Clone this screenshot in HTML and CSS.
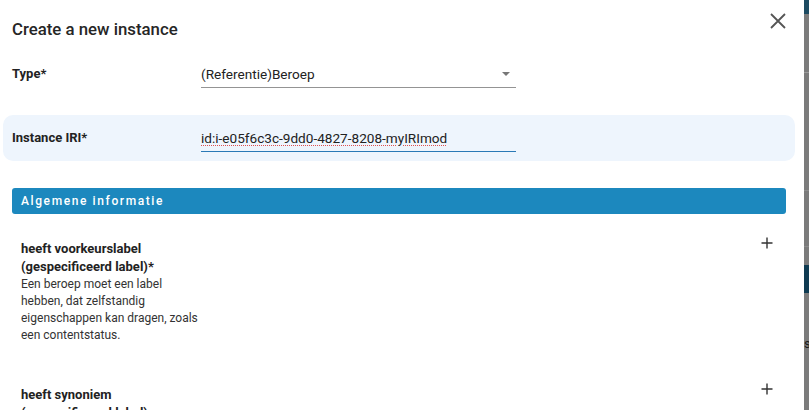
FILE: index.html
```html
<!DOCTYPE html>
<html lang="nl">
<head>
<meta charset="utf-8">
<title>Create a new instance</title>
<link rel="stylesheet" href="styles.css">
</head>
<body>
<div class="screen">
  <div class="dialog">
    <div class="dialog-header">
      <h1 class="dialog-title">Create a new instance</h1>
      <button class="close-btn" aria-label="Close">
        <svg width="16" height="16" viewBox="0 0 16 16"><path d="M1 1 L15 15 M15 1 L1 15" stroke="#555" stroke-width="1.8" fill="none"/></svg>
      </button>
    </div>

    <div class="field field-type">
      <div class="field-label">Type*</div>
      <div class="field-control select">
        <span class="value">(Referentie)Beroep</span>
        <span class="caret"></span>
      </div>
    </div>

    <div class="field field-iri">
      <div class="field-label">Instance IRI*</div>
      <div class="field-control input-active">
        <span class="value spell">id:i-e05f6c3c-9dd0-4827-8208-myIRImod</span>
      </div>
    </div>

    <div class="section">
      <div class="section-bar">Algemene informatie</div>

      <div class="prop">
        <div class="prop-info">
          <div class="prop-name">heeft voorkeurslabel (gespecificeerd label)*</div>
          <div class="prop-desc">Een beroep moet een label hebben, dat zelfstandig eigenschappen kan dragen, zoals een contentstatus.</div>
        </div>
        <svg class="plus" width="12" height="12" viewBox="0 0 12 12"><path d="M6 0.5 V11.5 M0.5 6 H11.5" stroke="#333" stroke-width="1.4" fill="none"/></svg>
      </div>

      <div class="prop">
        <div class="prop-info">
          <div class="prop-name">heeft synoniem (gespecificeerd label)</div>
        </div>
        <svg class="plus" width="12" height="12" viewBox="0 0 12 12"><path d="M6 0.5 V11.5 M0.5 6 H11.5" stroke="#333" stroke-width="1.4" fill="none"/></svg>
      </div>
    </div>
  </div>

  <div class="backdrop">
    <div class="bd-top"></div>
    <div class="bd-gray bd-a"></div>
    <div class="bd-line-light"></div>
    <div class="bd-gray bd-b"></div>
    <div class="bd-line"></div>
    <div class="bd-gray bd-c"></div>
    <div class="bd-line"></div>
    <div class="bd-gray bd-d"></div>
    <div class="bd-block"></div>
    <div class="bd-gray bd-e"><span class="bd-s">s</span></div>
  </div>
</div>
</body>
</html>
```

FILE: styles.css
```css
* { box-sizing: border-box; }
html, body { margin: 0; padding: 0; }
body {
  width: 809px;
  height: 410px;
  overflow: hidden;
  font-family: Roboto, "Liberation Sans", Arial, sans-serif;
  color: #222;
  background: #7a7a7a;
}
.screen {
  display: flex;
  width: 809px;
  height: 410px;
}
.dialog {
  width: 804px;
  height: 410px;
  background: #fff;
  overflow: hidden;
  flex: none;
}
.dialog-header {
  height: 46px;
  display: flex;
  justify-content: space-between;
  align-items: flex-start;
  padding: 0 18px 0 12px;
}
.dialog-title {
  margin: 0;
  padding-top: 19px;
  font-size: 16.8px;
  line-height: 20px;
  font-weight: 500;
  color: #262626;
}
.close-btn {
  margin-top: 13px;
  width: 16px;
  height: 16px;
  padding: 0;
  border: 0;
  background: none;
  display: block;
}
.close-btn svg { display: block; }

.field {
  display: flex;
  align-items: flex-end;
  padding-left: 12px;
}
.field-type { padding-top: 18px; }
.field-label {
  width: 189px;
  font-size: 13px;
  font-weight: 700;
  line-height: 20px;
  padding-bottom: 4px;
  color: #222;
}
.field-control {
  width: 315px;
  display: flex;
  align-items: center;
  justify-content: space-between;
  font-size: 13.6px;
  line-height: 20px;
  padding-bottom: 3px;
  border-bottom: 1px solid #949494;
  color: #222;
}
.caret {
  width: 0;
  height: 0;
  margin-right: 6px;
  border-left: 4.5px solid transparent;
  border-right: 4.5px solid transparent;
  border-top: 4.5px solid #777;
}
.field-iri {
  margin: 27px 0 0 3px;
  width: 792px;
  padding: 13px 0 9px 9px;
  background: #eef5fd;
  border-radius: 10px;
}
.input-active { border-bottom-color: #2a79b6; }
.spell {
  text-decoration: underline dotted #e0504f;
  text-decoration-thickness: 1.2px;
  text-underline-offset: 2px;
}

.section {
  margin: 27px 0 0 12px;
  width: 774px;
}
.section-bar {
  height: 26px;
  line-height: 26px;
  padding-left: 9px;
  background: #1c88be;
  color: #fff;
  border-radius: 3px;
  font-size: 12px;
  font-weight: 500;
  letter-spacing: 1.6px;
}
.prop {
  display: flex;
  justify-content: space-between;
  align-items: flex-start;
  padding: 0 13px 0 9px;
  margin-top: 26px;
}
.prop + .prop { margin-top: 42px; }
.prop-info { width: 181px; }
.prop-name {
  font-size: 13px;
  font-weight: 700;
  line-height: 18px;
  color: #222;
}
.prop-desc {
  font-size: 12px;
  line-height: 17px;
  color: #333;
}
.plus { display: block; margin-top: -3px; }

.backdrop {
  width: 5px;
  height: 410px;
  flex: none;
  display: flex;
  flex-direction: column;
}
.bd-top { height: 14px; background: #1d4b62; }
.bd-gray { background: #7b7b7b; }
.bd-a { height: 58px; }
.bd-line-light { height: 1px; background: #9a9a9a; }
.bd-b { height: 117px; }
.bd-line { height: 1px; background: #8c8c8c; }
.bd-c { height: 55px; }
.bd-d { height: 18px; }
.bd-block { height: 28px; background: #0f3b52; }
.bd-e { flex: 1; position: relative; overflow: hidden; }
.bd-s {
  position: absolute;
  left: 0;
  top: 43px;
  font-size: 13px;
  line-height: 16px;
  color: #1a1a1a;
}
```
